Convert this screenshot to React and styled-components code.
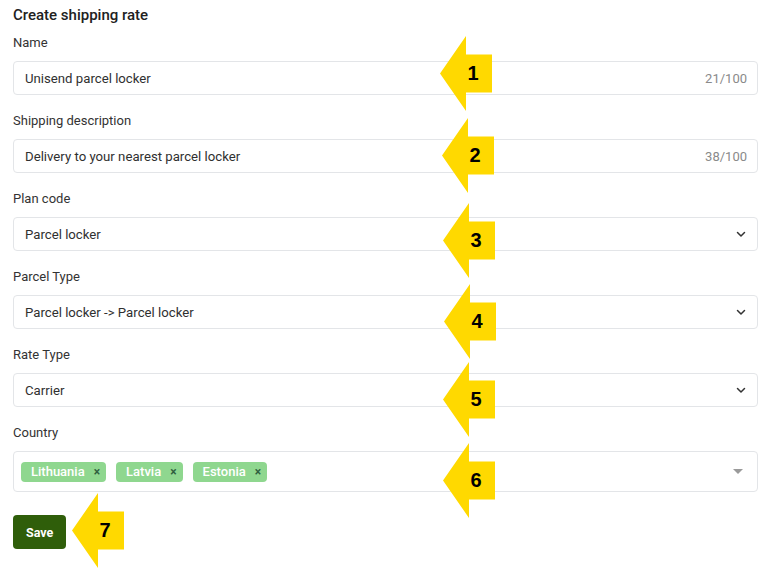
import React from 'react';
import styled, { createGlobalStyle } from 'styled-components';

const GlobalStyle = createGlobalStyle`
  body {
    margin: 0;
    background: #ffffff;
    font-family: Roboto, "Liberation Sans", Arial, sans-serif;
  }
`;

const Page = styled.div`
  position: relative;
  width: 765px;
  height: 573px;
  box-sizing: border-box;
  padding: 5px 7px 0 13px;
  color: #303030;
`;

const Title = styled.div`
  font-size: 15px;
  font-weight: 500;
  line-height: 20px;
  color: #212121;
  margin-bottom: 8px;
`;

const Field = styled.div`
  display: flex;
  flex-direction: column;
  margin-bottom: 16px;
`;

const Label = styled.div`
  font-size: 13px;
  line-height: 19px;
  color: #333333;
  margin-bottom: 9px;
`;

const Box = styled.div`
  display: flex;
  align-items: center;
  box-sizing: border-box;
  height: ${p => (p.tall ? '41px' : '34px')};
  padding: ${p => (p.tall ? '0 14px 0 7px' : '0 10px 0 11px')};
  border: 1px solid #e3e5e8;
  border-radius: 4px;
  background: #fff;
  font-size: 13.2px;
  color: #303030;
`;

const Value = styled.div`
  flex: 1;
`;

const Counter = styled.div`
  color: #8a8a8a;
  font-size: 13px;
`;

const Chips = styled.div`
  flex: 1;
  display: flex;
  gap: 10px;
`;

const Chip = styled.div`
  display: flex;
  align-items: center;
  height: 20px;
  padding: 0 6px 0 10px;
  gap: 9px;
  background: #8fd78f;
  border-radius: 4px;
  color: #ffffff;
  font-size: 13px;
  font-weight: 500;
`;

const ChipX = styled.span`
  color: #2f5f3f;
  font-size: 12px;
  font-weight: 700;
`;

const Caret = styled.div`
  width: 0;
  height: 0;
  border-left: 5px solid transparent;
  border-right: 5px solid transparent;
  border-top: 5px solid #9a9a9a;
`;

const SaveButton = styled.button`
  margin-top: 7px;
  height: 34px;
  padding: 0 13px;
  border: none;
  border-radius: 4px;
  background: #2f5e0a;
  color: #ffffff;
  font-family: Roboto, "Liberation Sans", Arial, sans-serif;
  font-size: 12.5px;
  font-weight: 700;
`;

const Arrow = styled.div`
  position: absolute;
  width: 52px;
  height: 75px;
`;

const ArrowNum = styled.div`
  position: absolute;
  left: 22px;
  top: 0;
  width: 22px;
  height: 75px;
  display: flex;
  align-items: center;
  justify-content: center;
  font-family: "Liberation Sans", Arial, sans-serif;
  font-weight: 700;
  font-size: 20px;
  color: #000;
`;

const Chevron = () => (
  <svg width="12" height="12" viewBox="0 0 12 12">
    <path d="M2.5 4.5 L6 8 L9.5 4.5" fill="none" stroke="#333" strokeWidth="1.5" strokeLinecap="round" strokeLinejoin="round" />
  </svg>
);

const Pointer = ({ n, left, top }) => (
  <Arrow style={{ left, top }}>
    <svg width="52" height="75" viewBox="0 0 52 75">
      <polygon points="0,37.5 26,0 26,18.5 52,18.5 52,56.5 26,56.5 26,75" fill="#ffd900" />
    </svg>
    <ArrowNum>{n}</ArrowNum>
  </Arrow>
);

const selects = [
  { label: 'Plan code', value: 'Parcel locker' },
  { label: 'Parcel Type', value: 'Parcel locker -> Parcel locker' },
  { label: 'Rate Type', value: 'Carrier' },
];

const pointers = [
  [440, 36], [442, 118], [443, 203], [444, 284], [443, 362], [443, 443], [72, 493],
];

const App = () => (
  <Page>
    <GlobalStyle />
    <Title>Create shipping rate</Title>
    <Field>
      <Label>Name</Label>
      <Box>
        <Value>Unisend parcel locker</Value>
        <Counter>21/100</Counter>
      </Box>
    </Field>
    <Field>
      <Label>Shipping description</Label>
      <Box>
        <Value>Delivery to your nearest parcel locker</Value>
        <Counter>38/100</Counter>
      </Box>
    </Field>
    {selects.map(s => (
      <Field key={s.label}>
        <Label>{s.label}</Label>
        <Box>
          <Value>{s.value}</Value>
          <Chevron />
        </Box>
      </Field>
    ))}
    <Field>
      <Label>Country</Label>
      <Box tall>
        <Chips>
          {['Lithuania', 'Latvia', 'Estonia'].map(c => (
            <Chip key={c}>
              {c}
              <ChipX>×</ChipX>
            </Chip>
          ))}
        </Chips>
        <Caret />
      </Box>
    </Field>
    <SaveButton>Save</SaveButton>
    {pointers.map(([l, t], i) => (
      <Pointer key={i} n={i + 1} left={l} top={t} />
    ))}
  </Page>
);

export default App;
